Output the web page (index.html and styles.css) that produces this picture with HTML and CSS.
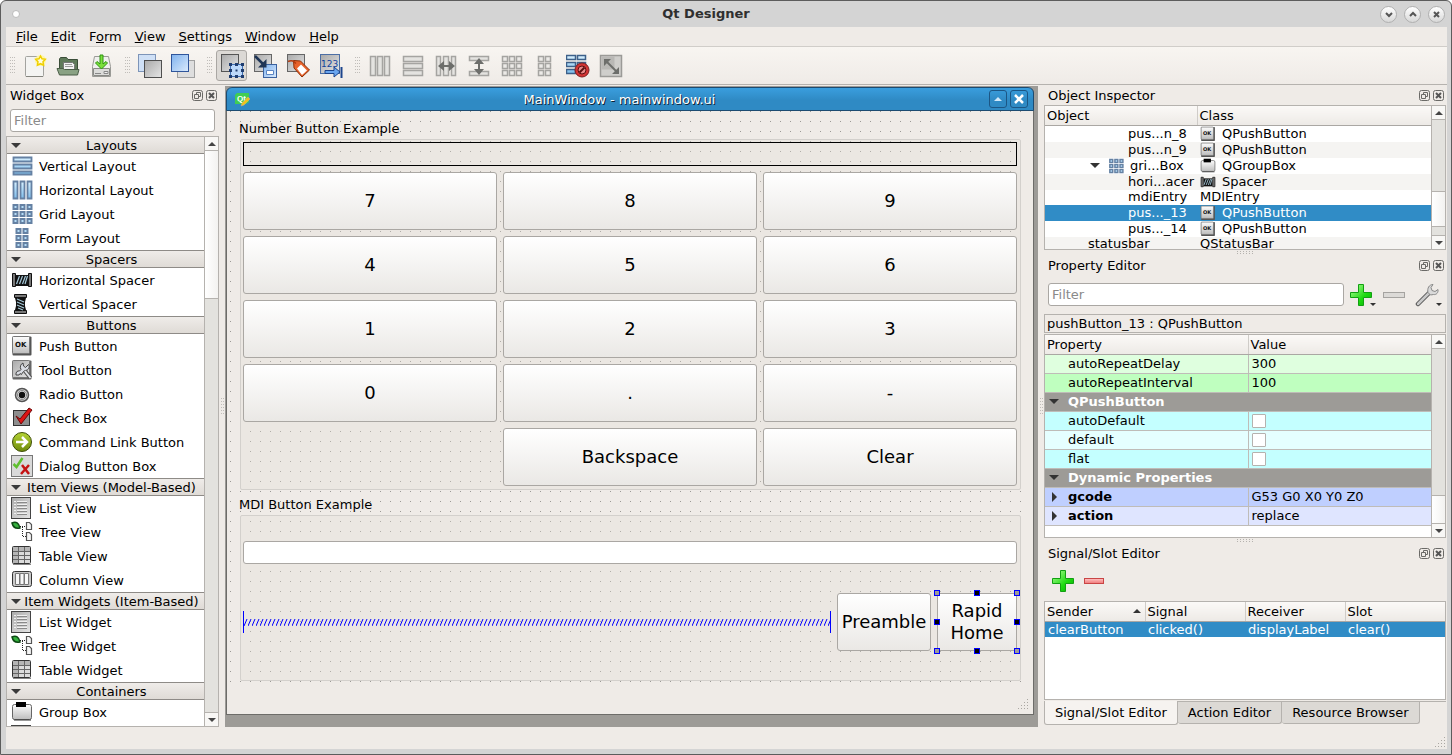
FILE: index.html
```html
<!DOCTYPE html>
<html lang="en">
<head>
    <meta charset="UTF-8">
    <meta name="viewport" content="width=device-width, initial-scale=1.0">
    <title>Qt Designer</title>
    <link rel="stylesheet" href="styles.css">
</head>
<body>

    <!-- icon set -->
    <svg class="defs" width="0" height="0" aria-hidden="true">
        <defs>
            <linearGradient id="g-blue" x1="0" y1="0" x2="1" y2="1"><stop offset="0" stop-color="#7fb2ee"/><stop offset="1" stop-color="#dcebfc"/></linearGradient>
            <linearGradient id="g-cell" x1="0" y1="0" x2="0" y2="1"><stop offset="0" stop-color="#d9f1ff"/><stop offset="1" stop-color="#7cbdec"/></linearGradient>
            <linearGradient id="g-grey" x1="0" y1="0" x2="1" y2="1"><stop offset="0" stop-color="#8d8d8d"/><stop offset="1" stop-color="#e6e6e6"/></linearGradient>
            <linearGradient id="g-pale" x1="0" y1="0" x2="1" y2="1"><stop offset="0" stop-color="#a9a9a9"/><stop offset="1" stop-color="#e6e6e6"/></linearGradient>
            <linearGradient id="g-light" x1="0" y1="0" x2="0" y2="1"><stop offset="0" stop-color="#fdfdfd"/><stop offset="1" stop-color="#bdbdbd"/></linearGradient>
            <linearGradient id="g-green" x1="0" y1="0" x2="1" y2="1"><stop offset="0" stop-color="#b6ff9e"/><stop offset="0.6" stop-color="#1edb10"/><stop offset="1" stop-color="#06a806"/></linearGradient>
            <linearGradient id="g-red" x1="0" y1="0" x2="0" y2="1"><stop offset="0" stop-color="#ffc4c4"/><stop offset="1" stop-color="#f07878"/></linearGradient>
            <linearGradient id="g-olive" x1="0" y1="0" x2="0" y2="1"><stop offset="0" stop-color="#b5d334"/><stop offset="1" stop-color="#6d8a0b"/></linearGradient>
        </defs>

        <symbol id="new" viewBox="0 0 24 24">
            <rect x="2.500" y="2.500" width="18" height="20" rx="1" fill="#f4f4f2" stroke="#a3a39f"/>
            <path d="M3 22.500h17" stroke="#85857f"/>
            <circle cx="17.500" cy="6.500" r="5.500" fill="#fff6a8"/>
            <path d="M17.500 2l1.500 2.800 3.300.5-2.300 2.500.6 3.400-3.100-1.500-3.100 1.500.6-3.400-2.300-2.500 3.300-.5z" fill="#fffce0" stroke="#f0d000" stroke-width="1.500"/>
        </symbol>
        <symbol id="open" viewBox="0 0 24 24">
            <path d="M3.500 18V5l1-1.500h6l1.500 2h9.500V16z" fill="#5f7a5a" stroke="#3a4d38"/>
            <path d="M7.500 8.500h9l2 2v6h-11z" fill="#f2f2f2" stroke="#777"/>
            <path d="M9 10.500h7M9 12.500h8" stroke="#999"/>
            <path d="M1 14.500h6l1.500 1h14.500l-1.500 5.500h-18z" fill="#8aa284" stroke="#4b5f48"/>
        </symbol>
        <symbol id="save" viewBox="0 0 24 24">
            <path d="M5.500 2.500h14l2 10v10h-18v-10z" fill="#f0f0ee" stroke="#9a9a96"/>
            <path d="M4.500 14.500h16v7h-16z" fill="#dcdcda" stroke="#8a8a86"/>
            <path d="M6 19.500h6M15 17.500h4v2h-4z" stroke="#888" fill="#eee"/>
            <path d="M11 1h3v9l3-2.500 1.500 1.500L12.500 15 6.500 9 8 7.500l3 2.500z" fill="#7be03c" stroke="#2c9410"/>
        </symbol>
        <symbol id="lower" viewBox="0 0 24 24">
            <rect x=".5" y=".5" width="17" height="17" fill="#cfe0f6" stroke="#7d94b8"/>
            <rect x="6.500" y="6.500" width="17" height="17" fill="url(#g-pale)" stroke="#4f4f4f"/>
        </symbol>
        <symbol id="raise" viewBox="0 0 24 24">
            <rect x="6.500" y="6.500" width="17" height="17" fill="#dedede" stroke="#a0a0a0"/>
            <rect x=".5" y=".5" width="17" height="17" fill="url(#g-blue)" stroke="#2f559b"/>
        </symbol>
        <symbol id="edit-widgets" viewBox="0 0 24 24">
            <rect x="1.500" y=".5" width="17" height="17" fill="url(#g-pale)" stroke="#555"/>
            <rect x="10.500" y="10.500" width="12" height="12" fill="#bcd8fa" stroke="#3f6fb5"/>
            <path d="M9 9h3v3H9zM15 9h3v3h-3zM21 9h3v3h-3zM9 15h3v3H9zM21 15h3v3h-3zM9 21h3v3H9zM15 21h3v3h-3zM21 21h3v3h-3z" fill="#1f3c6e"/>
            <rect x="15.500" y="15.500" width="2" height="2" fill="#1f3c6e"/>
        </symbol>
        <symbol id="edit-signals" viewBox="0 0 24 24">
            <rect x="1.500" y=".5" width="17" height="17" fill="url(#g-pale)" stroke="#666"/>
            <rect x="10.500" y="10.500" width="13" height="13" fill="url(#g-blue)" stroke="#3b62a0"/>
            <path d="M13.500 16.500h7v4h-7z" fill="#fff" stroke="#5c86c4"/>
            <path d="M2 2l9 9" stroke="#1f3556" stroke-width="2.500"/>
            <path d="M13.500 5v8.500H5z" fill="#1f3556"/>
        </symbol>
        <symbol id="edit-buddies" viewBox="0 0 24 24">
            <rect x="1.500" y=".5" width="17" height="17" fill="url(#g-pale)" stroke="#666"/>
            <path d="M7.500 6.500l7 .5 9 9-7.500 7-8-9z" fill="#e8622a" stroke="#8c3008"/>
            <path d="M11 14.500l4-4 6 6-5 4.500z" fill="#fff"/>
            <path d="M2 7.500c4-2 6 0 8 2" fill="none" stroke="#b33b10" stroke-width="1.500"/>
        </symbol>
        <symbol id="tab-order" viewBox="0 0 24 24">
            <rect x="1.500" y=".5" width="19" height="19" fill="url(#g-pale)" stroke="#4d6fa5"/>
            <path d="M6 16.500h9v-3.500l6 5-6 5v-3.500H6z" fill="#6aa6ef" stroke="#1c458c"/>
            <path d="M22.500 13v11" stroke="#1c458c" stroke-width="2"/>
        </symbol>
        <symbol id="t-hbox" viewBox="0 0 24 24">
            <path d="M2.500 2.500h5v19h-5zM9.500 2.500h5v19h-5zM16.500 2.500h5v19h-5z" fill="#e4e3e0" stroke="#a5a4a1" stroke-width="1.500"/>
        </symbol>
        <symbol id="t-vbox" viewBox="0 0 24 24">
            <path d="M2.500 2.500h19v5h-19zM2.500 9.500h19v5h-19zM2.500 16.500h19v5h-19z" fill="#e4e3e0" stroke="#a5a4a1" stroke-width="1.500"/>
        </symbol>
        <symbol id="t-hsplit" viewBox="0 0 24 24">
            <path d="M2.500 2.500h4v19h-4zM9.500 2.500h5v19h-5zM17.500 2.500h4v19h-4z" fill="#e4e3e0" stroke="#a5a4a1" stroke-width="1.500"/>
            <path d="M4 12l6-5v4h5V7l6 5-6 5v-4h-5v4z" fill="#6d6e6b"/>
        </symbol>
        <symbol id="t-vsplit" viewBox="0 0 24 24">
            <path d="M2.500 2.500h19v4h-19zM2.500 17.500h19v4h-19z" fill="#e4e3e0" stroke="#a5a4a1" stroke-width="1.500"/>
            <path d="M12 4l5 6h-4v5h4l-5 6-5-6h4v-5H7z" fill="#6d6e6b"/>
        </symbol>
        <symbol id="t-grid" viewBox="0 0 24 24">
            <path d="M2.500 2.500h5v5h-5zM9.500 2.500h5v5h-5zM16.500 2.500h5v5h-5zM2.500 9.500h5v5h-5zM9.500 9.500h5v5h-5zM16.500 9.500h5v5h-5zM2.500 16.500h5v5h-5zM9.500 16.500h5v5h-5zM16.500 16.500h5v5h-5z" fill="#eceae7" stroke="#a5a4a1" stroke-width="1.500"/>
        </symbol>
        <symbol id="t-form" viewBox="0 0 24 24">
            <path d="M5.500 2.500h5v5h-5zM12.500 2.500h5v5h-5zM5.500 9.500h5v5h-5zM12.500 9.500h5v5h-5zM5.500 16.500h5v5h-5zM12.500 16.500h5v5h-5z" fill="#eceae7" stroke="#a5a4a1" stroke-width="1.500"/>
        </symbol>
        <symbol id="t-break" viewBox="0 0 24 24">
            <path d="M.5 1.500h9v4h-9zM11.500 1.500h8v4h-8zM.5 8.500h9v4h-9zM11.500 8.500h8v4h-8zM.5 15.500h9v4h-9z" fill="url(#g-cell)" stroke="#3d6089" stroke-width="1.500"/>
            <circle cx="16" cy="16" r="7" fill="#d23434" stroke="#7d2020"/>
            <circle cx="16" cy="16" r="4" fill="#e88a8a" stroke="#5d1010"/>
            <path d="M13.500 18.500l5-5" stroke="#5d1010" stroke-width="2"/>
        </symbol>
        <symbol id="t-adjust" viewBox="0 0 24 24">
            <rect x="1.500" y="1.500" width="21" height="21" fill="#cfcecb" stroke="#9b9a97" stroke-width="1.500"/>
            <rect x="2.500" y="2.500" width="13" height="13" fill="#b9b8b5"/>
            <path d="M7 7l11 11" stroke="#6d6e6b" stroke-width="2"/>
            <path d="M5 5h7l-7 7zM20 20h-7l7-7z" fill="#6d6e6b"/>
        </symbol>

        <symbol id="vbox" viewBox="0 0 22 22">
            <path d="M2.500 2.500h18v4h-18zM2.500 9.500h18v4h-18zM2.500 16.500h18v3h-18z" fill="url(#g-cell)" stroke="#6581a3" stroke-width="1.800"/>
        </symbol>
        <symbol id="hbox" viewBox="0 0 22 22">
            <path d="M2.500 2.500h4v17h-4zM9.500 2.500h4v17h-4zM16.500 2.500h4v17h-4z" fill="url(#g-cell)" stroke="#6581a3" stroke-width="1.800"/>
        </symbol>
        <symbol id="grid" viewBox="0 0 22 22">
            <path d="M2.500 2h4v4h-4zM9.500 2h4v4h-4zM16.500 2h4v4h-4zM2.500 9h4v4h-4zM9.500 9h4v4h-4zM16.500 9h4v4h-4zM2.500 16h4v4h-4zM9.500 16h4v4h-4zM16.500 16h4v4h-4z" fill="#b5ddf8" stroke="#6581a3" stroke-width="2"/>
        </symbol>
        <symbol id="form" viewBox="0 0 22 22">
            <path d="M5.500 2h4v4h-4zM12.500 2h4v4h-4zM5.500 9h4v4h-4zM12.500 9h4v4h-4zM5.500 16h4v4h-4zM12.500 16h4v4h-4z" fill="#b5ddf8" stroke="#6581a3" stroke-width="2"/>
        </symbol>
        <symbol id="hspacer" viewBox="0 0 22 22">
            <path d="M1.500 4.500h3v13h-3zM17.500 4.500h3v13h-3z" fill="#777" stroke="#111"/>
            <path d="M5 6h12v11H5z" fill="#111"/>
            <path d="M5.500 15l3-8M8.500 15l3-8M11.500 15l3-8M14 15l2.500-8" stroke="#a5c8d8" stroke-width="1.200"/>
        </symbol>
        <symbol id="vspacer" viewBox="0 0 22 22">
            <path d="M3.500 1.500h12v3h-12zM3.500 17.500h12v3h-12z" fill="#777" stroke="#111"/>
            <path d="M4 5h11l-1 4v4l1 4H4l1-4V9z" fill="#111"/>
            <path d="M6 6l7 3M6 9l7 3M6 12l7 3M7 15l5 2" stroke="#a5c8d8" stroke-width="1.200"/>
        </symbol>
        <symbol id="pushbutton" viewBox="0 0 22 22">
            <rect x="1.500" y="1.500" width="19" height="19" rx="1" fill="#555"/>
            <rect x="1.500" y="1.500" width="17" height="17" rx="1" fill="url(#g-light)" stroke="#777"/>
        </symbol>
        <symbol id="toolbutton" viewBox="0 0 22 22">
            <rect x="1.500" y="1.500" width="19" height="19" rx="1" fill="#666"/>
            <rect x="1.500" y="1.500" width="17" height="17" rx="1" fill="url(#g-pale)" stroke="#777"/>
            <path d="M12 4a4.500 4.500 0 0 0-2 6.500l-1.500 1.500c-2-.5-4 1-3.500 4h3l1-1.500 1.500 1 1-2 2.500-2c4 0 5-4 3.500-6L14.500 8.500 12.500 7z" fill="#d9dce3" stroke="#444"/>
            <path d="M14 12l5.500 7" stroke="#555" stroke-width="4"/>
            <path d="M14 12l5.500 7" stroke="#e2e4e8" stroke-width="2"/>
        </symbol>
        <symbol id="radio" viewBox="0 0 22 22">
            <circle cx="11" cy="12" r="6.500" fill="#d5d5d5" stroke="#555" stroke-width="1.500"/>
            <circle cx="11" cy="12" r="4.500" fill="#e5e5e5" stroke="#888"/>
            <circle cx="11" cy="12" r="3.200" fill="#111"/>
        </symbol>
        <symbol id="checkbox" viewBox="0 0 22 22">
            <rect x="2.500" y="3.500" width="16" height="15" fill="#8e8e8e" stroke="#333"/>
            <path d="M5 9l4 3 9-11 3 2-11 14z" fill="#dd1414" stroke="#6d0707"/>
        </symbol>
        <symbol id="cmdlink" viewBox="0 0 22 22">
            <circle cx="11" cy="11" r="9.500" fill="url(#g-olive)" stroke="#3f4f08"/>
            <path d="M5 11h10M11 6l5 5-5 5" fill="none" stroke="#fff" stroke-width="2.500"/>
        </symbol>
        <symbol id="dialogbox" viewBox="0 0 22 22">
            <rect x=".5" y=".5" width="21" height="21" fill="#d9d9d9" stroke="#777"/>
            <path d="M2.500 9l3 3 6-9" fill="none" stroke="#5fbf2f" stroke-width="2.500"/>
            <path d="M11 10l7 9M18 10l-8 9" stroke="#c51212" stroke-width="2.500"/>
        </symbol>
        <symbol id="listview" viewBox="0 0 22 22">
            <rect x=".5" y=".5" width="19" height="21" fill="url(#g-pale)" stroke="#444"/>
            <path d="M3 4.500h2M3 7.500h2M3 10.500h2M3 13.500h2M3 16.500h2M6 4.500h10M6 7.500h10M6 10.500h10M6 13.500h10M6 16.500h10" stroke="#efefef"/>
            <path d="M6 5.500h10M6 8.500h10M6 11.500h10M6 14.500h10M6 17.500h10" stroke="#8a8a8a"/>
        </symbol>
        <symbol id="treeview" viewBox="0 0 22 22">
            <path d="M1 2c4-2 7 0 8 5-4 1-7-1-8-5z" fill="#35b23e" stroke="#0d4a14" stroke-width="1.500"/>
            <path d="M9 5.500h6M11.500 6v10M12 15.500h4" fill="none" stroke="#222" stroke-dasharray="1 1"/>
            <path d="M15.500 1.500h3l2 2v5h-5zM15.500 11.500h3l2 2v6h-5z" fill="#f5f5f5" stroke="#555" stroke-width="1.200"/>
        </symbol>
        <symbol id="tableview" viewBox="0 0 22 22">
            <rect x="1.500" y="1.500" width="18" height="17" rx="1" fill="#dcdcdc" stroke="#333"/>
            <path d="M2 2h17v4H2zM2 2h5v16H2z" fill="#b5b5b5"/>
            <path d="M2 6.500h17M2 10.500h17M2 14.500h17M7.500 2v16M13.500 2v16" stroke="#666"/>
            <path d="M2 19.500h18" stroke="#888"/>
        </symbol>
        <symbol id="columnview" viewBox="0 0 22 22">
            <rect x="1.500" y="2.500" width="19" height="15" rx="2" fill="#c9c9c9" stroke="#333"/>
            <path d="M4.500 4.500h4v11h-4zM9 4.500h4v11H9zM13.500 4.500h4v11h-4z" fill="#f7f7f7" stroke="#777"/>
        </symbol>
        <symbol id="groupbox" viewBox="0 0 22 22">
            <rect x="1.500" y="3.500" width="19" height="15" rx="2" fill="url(#g-light)" stroke="#666"/>
            <path d="M3 19h17" stroke="#333"/>
            <rect x="5" y="1" width="10" height="5" fill="#000"/>
        </symbol>

        <symbol id="plus" viewBox="0 0 24 24">
            <path d="M9.500 1.500h5v8h8v5h-8v8h-5v-8h-8v-5h8z" fill="url(#g-green)" stroke="#12a012"/>
        </symbol>
        <symbol id="minus-red" viewBox="0 0 24 24">
            <rect x="2.500" y="9.500" width="19" height="5" fill="url(#g-red)" stroke="#c94545"/>
        </symbol>
        <symbol id="minus-grey" viewBox="0 0 24 24">
            <rect x="1.500" y="9.500" width="21" height="5" fill="#dcdad7" stroke="#a5a3a0"/>
        </symbol>
        <symbol id="wrench" viewBox="0 0 24 24">
            <path d="M3 21L15 9" stroke="#555" stroke-width="4.500" stroke-linecap="round"/>
            <path d="M3 21L15 9" stroke="#c9c9c9" stroke-width="2.500" stroke-linecap="round"/>
            <path d="M18 1.500l-2 3 1 3 3 1 3-2c.5 3-1.500 5.500-4.500 5l-3 .5-2.500-2.500c-1-4 1-8 5-8z" fill="#d9d9d9" stroke="#888"/>
        </symbol>
        <symbol id="float" viewBox="0 0 12 12">
            <rect x=".5" y=".5" width="10" height="10" rx="2" fill="none" stroke="#6b6a67"/>
            <path d="M4.500 4.500v-2h4v4h-2M2.500 4.500h4v4h-4z" fill="none" stroke="#6b6a67"/>
        </symbol>
        <symbol id="close" viewBox="0 0 12 12">
            <rect x=".5" y=".5" width="10" height="10" rx="2" fill="none" stroke="#6b6a67"/>
            <path d="M3 3l5 5M8 3L3 8" stroke="#555" stroke-width="2"/>
        </symbol>
        <symbol id="qt" viewBox="0 0 16 16">
            <path d="M3 2h12v9l-3 2H1V4z" fill="#41cd52"/>
        </symbol>
        <symbol id="pencil" viewBox="0 0 16 16">
            <path d="M7 15l1-3 6-6 2 2-6 6z" fill="#f2c21a" stroke="#c9b48a" stroke-width=".5"/>
        </symbol>
        <symbol id="grip" viewBox="0 0 12 12">
            <path d="M10 1.500h1M7 4.500h1M10 4.500h1M4 7.500h1M7 7.500h1M10 7.500h1M1 10.500h1M4 10.500h1M7 10.500h1M10 10.500h1" stroke="#aaa7a2"/>
        </symbol>
    </svg>

    <div class="window">
        <header class="titlebar">
            <span class="titlebar-dot"></span>
            <h1>Qt Designer</h1>
            <div class="titlebar-buttons">
                <button aria-label="Minimize"><svg width="17" height="17"><path d="M6 7l3 3 3-3"/></svg></button>
                <button aria-label="Maximize"><svg width="17" height="17"><path d="M6 10l3-3 3 3"/></svg></button>
                <button aria-label="Close"><svg width="17" height="17"><path d="M6 6l5 5M11 6l-5 5"/></svg></button>
            </div>
        </header>

        <nav class="menubar">
            <a href="#"><u>F</u>ile</a>
            <a href="#"><u>E</u>dit</a>
            <a href="#">F<u>o</u>rm</a>
            <a href="#"><u>V</u>iew</a>
            <a href="#"><u>S</u>ettings</a>
            <a href="#"><u>W</u>indow</a>
            <a href="#"><u>H</u>elp</a>
        </nav>

        <div class="toolbar">
            <span class="handle"></span>
            <button aria-label="New"><svg><use href="#new"/></svg></button>
            <button aria-label="Open"><svg><use href="#open"/></svg></button>
            <button aria-label="Save"><svg><use href="#save"/></svg></button>
            <span class="handle"></span>
            <button aria-label="Send to Back"><svg><use href="#lower"/></svg></button>
            <button aria-label="Bring to Front"><svg><use href="#raise"/></svg></button>
            <span class="handle"></span>
            <button class="checked" aria-label="Edit Widgets"><svg><use href="#edit-widgets"/></svg></button>
            <button aria-label="Edit Signals/Slots"><svg><use href="#edit-signals"/></svg></button>
            <button aria-label="Edit Buddies"><svg><use href="#edit-buddies"/></svg></button>
            <button aria-label="Edit Tab Order"><svg viewBox="0 0 24 24"><use href="#tab-order"/><text class="order-text" x="2" y="13">123</text></svg></button>
            <span class="handle"></span>
            <button aria-label="Lay Out Horizontally"><svg><use href="#t-hbox"/></svg></button>
            <button aria-label="Lay Out Vertically"><svg><use href="#t-vbox"/></svg></button>
            <button aria-label="Horizontal Splitter"><svg><use href="#t-hsplit"/></svg></button>
            <button aria-label="Vertical Splitter"><svg><use href="#t-vsplit"/></svg></button>
            <button aria-label="Lay Out in a Grid"><svg><use href="#t-grid"/></svg></button>
            <button aria-label="Lay Out in a Form"><svg><use href="#t-form"/></svg></button>
            <button aria-label="Break Layout"><svg><use href="#t-break"/></svg></button>
            <button aria-label="Adjust Size"><svg><use href="#t-adjust"/></svg></button>
        </div>

        <main class="workspace">
            <section class="dock widget-box">
                <div class="dock-title">
                    <h2>Widget Box</h2>
                    <button aria-label="Float"><svg><use href="#float"/></svg></button>
                    <button aria-label="Close"><svg><use href="#close"/></svg></button>
                </div>
                <input class="filter" type="text" placeholder="Filter" aria-label="Filter widgets">
                <div class="view widget-view">
                    <div class="view-body">
                        <button class="category">Layouts</button>
                        <ul>
                            <li><svg><use href="#vbox"/></svg>Vertical Layout</li>
                            <li><svg><use href="#hbox"/></svg>Horizontal Layout</li>
                            <li><svg><use href="#grid"/></svg>Grid Layout</li>
                            <li><svg><use href="#form"/></svg>Form Layout</li>
                        </ul>
                        <button class="category">Spacers</button>
                        <ul>
                            <li><svg><use href="#hspacer"/></svg>Horizontal Spacer</li>
                            <li><svg><use href="#vspacer"/></svg>Vertical Spacer</li>
                        </ul>
                        <button class="category">Buttons</button>
                        <ul>
                            <li><svg viewBox="0 0 22 22"><use href="#pushbutton"/><text class="ok-text" x="4" y="12">OK</text></svg>Push Button</li>
                            <li><svg><use href="#toolbutton"/></svg>Tool Button</li>
                            <li><svg><use href="#radio"/></svg>Radio Button</li>
                            <li><svg><use href="#checkbox"/></svg>Check Box</li>
                            <li><svg><use href="#cmdlink"/></svg>Command Link Button</li>
                            <li><svg><use href="#dialogbox"/></svg>Dialog Button Box</li>
                        </ul>
                        <button class="category">Item Views (Model-Based)</button>
                        <ul>
                            <li><svg><use href="#listview"/></svg>List View</li>
                            <li><svg><use href="#treeview"/></svg>Tree View</li>
                            <li><svg><use href="#tableview"/></svg>Table View</li>
                            <li><svg><use href="#columnview"/></svg>Column View</li>
                        </ul>
                        <button class="category">Item Widgets (Item-Based)</button>
                        <ul>
                            <li><svg><use href="#listview"/></svg>List Widget</li>
                            <li><svg><use href="#treeview"/></svg>Tree Widget</li>
                            <li><svg><use href="#tableview"/></svg>Table Widget</li>
                        </ul>
                        <button class="category">Containers</button>
                        <ul>
                            <li><svg><use href="#groupbox"/></svg>Group Box</li>
                            <li><svg><use href="#listview"/></svg></li>
                        </ul>
                    </div>
                    <div class="scrollbar at-top">
                        <button class="up" aria-label="Scroll up"></button>
                        <div class="track"><div class="thumb"></div></div>
                        <button class="down" aria-label="Scroll down"></button>
                    </div>
                </div>
            </section>

            <div class="splitter"></div>

            <section class="mdi">
                <div class="subwindow">
                    <div class="sub-title">
                        <svg class="qt-logo" viewBox="0 0 16 16"><use href="#qt"/><text class="qt-text" x="3" y="10">Qt</text><use href="#pencil"/></svg>
                        <h2>MainWindow - mainwindow.ui</h2>
                        <button aria-label="Shade"><svg width="16" height="16"><path d="M4 10h8l-4-4z" fill="#cfe8fa"/></svg></button>
                        <button aria-label="Close"><svg width="16" height="16"><path d="M4 4l8 8M12 4l-8 8" stroke="#fff" stroke-width="2.500"/></svg></button>
                    </div>
                    <div class="form">
                        <h3>Number Button Example</h3>
                        <div class="group">
                            <div class="display"></div>
                            <div class="keypad">
                                <button>7</button>
                                <button>8</button>
                                <button>9</button>
                                <button>4</button>
                                <button>5</button>
                                <button>6</button>
                                <button>1</button>
                                <button>2</button>
                                <button>3</button>
                                <button>0</button>
                                <button>.</button>
                                <button>-</button>
                                <span></span>
                                <button>Backspace</button>
                                <button>Clear</button>
                            </div>
                        </div>
                        <h3>MDI Button Example</h3>
                        <div class="group mdi-group">
                            <input class="mdi-entry" type="text" aria-label="MDI entry">
                            <div class="mdi-row">
                                <svg class="h-spacer" height="22">
                                    <defs>
                                        <pattern id="hatch" width="4" height="7" patternUnits="userSpaceOnUse" y="8">
                                            <path d="M0 7L3 0" stroke="#0000ff" fill="none"/>
                                        </pattern>
                                    </defs>
                                    <rect x="0" y="8" width="100%" height="7" fill="url(#hatch)"/>
                                </svg>
                                <button class="preamble">Preamble</button>
                                <div class="selected">
                                    <button>Rapid<br>Home</button>
                                    <i class="knob tl"></i><i class="knob mid tc"></i><i class="knob tr"></i>
                                    <i class="knob mid ml"></i><i class="knob mid mr"></i>
                                    <i class="knob bl"></i><i class="knob mid bc"></i><i class="knob br"></i>
                                </div>
                            </div>
                        </div>
                    </div>
                    <div class="sub-status"><svg class="grip"><use href="#grip"/></svg></div>
                </div>
            </section>

            <div class="splitter"></div>

            <div class="right">
                <section class="dock">
                    <div class="dock-title">
                        <h2>Object Inspector</h2>
                        <button aria-label="Float"><svg><use href="#float"/></svg></button>
                        <button aria-label="Close"><svg><use href="#close"/></svg></button>
                    </div>
                    <div class="view object-view">
                        <div class="view-body">
                            <table class="objects">
                                <colgroup><col class="col-object"><col></colgroup>
                                <thead><tr><th>Object</th><th>Class</th></tr></thead>
                                <tbody>
                                    <tr><td class="level-3">pus...n_8</td><td><svg viewBox="0 0 22 22"><use href="#pushbutton"/><text class="ok-text" x="4" y="12">OK</text></svg>QPushButton</td></tr>
                                    <tr><td class="level-3">pus...n_9</td><td><svg viewBox="0 0 22 22"><use href="#pushbutton"/><text class="ok-text" x="4" y="12">OK</text></svg>QPushButton</td></tr>
                                    <tr><td class="level-2"><i class="arrow"></i><svg><use href="#grid"/></svg>gri...Box</td><td><svg><use href="#groupbox"/></svg>QGroupBox</td></tr>
                                    <tr><td class="level-3">hori...acer</td><td><svg><use href="#hspacer"/></svg>Spacer</td></tr>
                                    <tr class="short"><td class="level-3">mdiEntry</td><td>MDIEntry</td></tr>
                                    <tr class="current"><td class="level-3">pus..._13</td><td><svg viewBox="0 0 22 22"><use href="#pushbutton"/><text class="ok-text" x="4" y="12">OK</text></svg>QPushButton</td></tr>
                                    <tr><td class="level-3">pus..._14</td><td><svg viewBox="0 0 22 22"><use href="#pushbutton"/><text class="ok-text" x="4" y="12">OK</text></svg>QPushButton</td></tr>
                                    <tr class="short"><td class="level-1">statusbar</td><td>QStatusBar</td></tr>
                                </tbody>
                            </table>
                        </div>
                        <div class="scrollbar near-end">
                            <button class="up" aria-label="Scroll up"></button>
                            <div class="track"><div class="thumb"></div></div>
                            <button class="down" aria-label="Scroll down"></button>
                        </div>
                    </div>
                </section>

                <div class="splitter-h"></div>

                <section class="dock property-dock">
                    <div class="dock-title">
                        <h2>Property Editor</h2>
                        <button aria-label="Float"><svg><use href="#float"/></svg></button>
                        <button aria-label="Close"><svg><use href="#close"/></svg></button>
                    </div>
                    <div class="property-tools">
                        <input class="filter" type="text" placeholder="Filter" aria-label="Filter properties">
                        <button class="has-menu" aria-label="Add dynamic property"><svg><use href="#plus"/></svg></button>
                        <button aria-label="Remove dynamic property"><svg><use href="#minus-grey"/></svg></button>
                        <button class="has-menu" aria-label="Configure"><svg><use href="#wrench"/></svg></button>
                    </div>
                    <div class="object-name">pushButton_13 : QPushButton</div>
                    <div class="view property-view">
                        <div class="view-body">
                            <table class="properties">
                                <colgroup><col class="col-property"><col></colgroup>
                                <thead><tr><th>Property</th><th>Value</th></tr></thead>
                                <tbody>
                                    <tr class="green-1"><td>autoRepeatDelay</td><td>300</td></tr>
                                    <tr class="green-2"><td>autoRepeatInterval</td><td>100</td></tr>
                                    <tr class="section"><td colspan="2"><i class="arrow"></i><b>QPushButton</b></td></tr>
                                    <tr class="cyan-2"><td id="p-auto">autoDefault</td><td><input type="checkbox" aria-labelledby="p-auto"></td></tr>
                                    <tr class="cyan-1"><td id="p-default">default</td><td><input type="checkbox" aria-labelledby="p-default"></td></tr>
                                    <tr class="cyan-2"><td id="p-flat">flat</td><td><input type="checkbox" aria-labelledby="p-flat"></td></tr>
                                    <tr class="section"><td colspan="2"><i class="arrow"></i><b>Dynamic Properties</b></td></tr>
                                    <tr class="blue-2"><td><i class="arrow closed"></i><b>gcode</b></td><td>G53 G0 X0 Y0 Z0</td></tr>
                                    <tr class="blue-1"><td><i class="arrow closed"></i><b>action</b></td><td>replace</td></tr>
                                </tbody>
                            </table>
                        </div>
                        <div class="scrollbar at-end">
                            <button class="up" aria-label="Scroll up"></button>
                            <div class="track"><div class="thumb"></div></div>
                            <button class="down" aria-label="Scroll down"></button>
                        </div>
                    </div>
                </section>

                <div class="splitter-h"></div>

                <section class="dock">
                    <div class="dock-title">
                        <h2>Signal/Slot Editor</h2>
                        <button aria-label="Float"><svg><use href="#float"/></svg></button>
                        <button aria-label="Close"><svg><use href="#close"/></svg></button>
                    </div>
                    <div class="signal-tools">
                        <button aria-label="Add connection"><svg><use href="#plus"/></svg></button>
                        <button aria-label="Remove connection"><svg><use href="#minus-red"/></svg></button>
                    </div>
                    <div class="view signal-view">
                        <div class="view-body">
                            <table class="signals">
                                <thead><tr><th class="sorted">Sender</th><th>Signal</th><th>Receiver</th><th>Slot</th></tr></thead>
                                <tbody><tr class="current"><td>clearButton</td><td>clicked()</td><td>displayLabel</td><td>clear()</td></tr></tbody>
                            </table>
                        </div>
                    </div>
                </section>

                <div class="tabs" role="tablist">
                    <button role="tab" class="active" aria-selected="true">Signal/Slot Editor</button>
                    <button role="tab">Action Editor</button>
                    <button role="tab">Resource Browser</button>
                </div>
            </div>
        </main>

        <footer class="statusbar"><svg class="grip"><use href="#grip"/></svg></footer>
    </div>

</body>
</html>
```

FILE: styles.css
```css
* {
    box-sizing: border-box;
}
body {
    margin: 0;
    background: #fff;
    font: 13px/16px "DejaVu Sans", sans-serif;
    color: #000;
}
h1, h2, h3, ul {
    margin: 0;
    padding: 0;
    font-size: 13px;
    font-weight: normal;
    list-style: none;
}
button, input {
    font: inherit;
    color: inherit;
    margin: 0;
}
button {
    padding: 0;
    border: none;
    background: none;
}
svg {
    display: block;
    flex: none;
}
.defs {
    position: absolute;
}
.ok-text {
    font-size: 7px;
    font-weight: bold;
    fill: #111;
}
.order-text {
    font-size: 9px;
    fill: #12449c;
}
.qt-text {
    font: bold 8px "Liberation Sans", sans-serif;
    fill: #fff;
}

/* main window */
.window {
    display: flex;
    flex-direction: column;
    height: 100vh;
    min-height: 640px;
    padding: 0 4px 5px 5px;
    border: 1px solid #5c5c5c;
    border-radius: 6px 6px 0 0;
    background: #d4d4d4;
}
.titlebar {
    display: flex;
    align-items: center;
    flex: none;
    height: 26px;
    padding-left: 6px;
}
.titlebar h1 {
    flex: 1;
    padding-left: 12px;
    font-weight: bold;
    text-align: center;
    color: #2f2f2f;
}
.titlebar-dot {
    width: 8px;
    height: 8px;
    border: 1px solid #bbb;
    border-radius: 50%;
    background: #fff;
}
.titlebar-buttons {
    display: flex;
    gap: 7px;
    padding-right: 2px;
}
.titlebar-buttons button {
    width: 17px;
    height: 17px;
    border: 1px solid #b0b0b0;
    border-radius: 50%;
    background: linear-gradient(#fff, #d8d8d8);
}
.titlebar-buttons svg {
    margin: -1px;
}
.titlebar-buttons path {
    fill: none;
    stroke: #555;
    stroke-width: 2;
}
.menubar {
    display: flex;
    flex: none;
    height: 20px;
    padding-left: 3px;
    border-bottom: 1px solid #d0cdc9;
    background: #efebe7;
}
.menubar a {
    padding: 2px 6px 0 7px;
    color: #000;
    text-decoration: none;
}
.toolbar {
    display: flex;
    align-items: center;
    flex: none;
    height: 38px;
    border-bottom: 1px solid #b5b2ae;
    background: linear-gradient(#f8f5f1, #efebe7);
}
.toolbar button {
    display: flex;
    align-items: center;
    justify-content: center;
    width: 31px;
    height: 31px;
    margin: 0 1px;
    border: 1px solid transparent;
    border-radius: 3px;
}
.toolbar .checked {
    border-color: #aaa7a3;
    background: #dcd9d5;
}
.toolbar svg {
    width: 24px;
    height: 24px;
}
.handle {
    width: 5px;
    height: 17px;
    margin: 0 3px 0 8px;
    background: conic-gradient(at 1px 1px, transparent 75%, #c0bdb9 0) 0 0 / 2px 3px;
}
.handle:first-child {
    margin-left: 4px;
}
.workspace {
    display: grid;
    grid-template-columns: 213px 6px minmax(500px, 1fr) 6px 402px;
    flex: 1;
    min-height: 0;
    padding: 1px 1px 0 0;
    background: #efebe7;
}
.statusbar {
    display: flex;
    align-items: flex-end;
    justify-content: flex-end;
    flex: none;
    height: 22px;
    padding: 1px 1px 1px 0;
    background: #efebe7;
}
.grip {
    width: 12px;
    height: 12px;
}
.splitter {
    align-self: center;
    justify-self: center;
    width: 3px;
    height: 17px;
    background: conic-gradient(at 1px 1px, transparent 75%, #c0bdb9 0) 0 0 / 2px 3px;
}
.splitter-h {
    flex: none;
    align-self: center;
    width: 17px;
    height: 3px;
    margin: 1px 0 2px;
    background: conic-gradient(at 1px 1px, transparent 75%, #b5b2ae 0) 0 0 / 3px 2px;
}

/* docks */
.dock {
    display: flex;
    flex-direction: column;
    min-height: 0;
}
.dock-title {
    display: flex;
    align-items: center;
    flex: none;
    gap: 2px;
    height: 19px;
    padding: 0 1px 0 4px;
}
.dock-title h2 {
    flex: 1;
}
.dock-title svg {
    width: 12px;
    height: 12px;
}
.filter {
    height: 23px;
    padding: 0 3px;
    border: 1px solid #aaa7a3;
    border-radius: 3px;
    background: #fff;
    outline: none;
}
.filter::placeholder {
    color: #8a8a8a;
    opacity: 1;
}
.view {
    display: flex;
    min-height: 0;
    border: 1px solid #b5b2ae;
    background: #fff;
    overflow: hidden;
}
.view-body {
    flex: 1;
    min-width: 0;
    overflow: hidden;
}
.widget-box .filter {
    flex: none;
    margin: 4px;
}
.widget-view {
    flex: 1;
}
.category {
    display: block;
    position: relative;
    width: 100%;
    height: 18px;
    padding-left: 12px;
    border-bottom: 1px solid #8e8b87;
    background: linear-gradient(#efece9, #dfdbd6);
    line-height: 17px;
    text-align: center;
}
ul + .category {
    border-top: 1px solid #8e8b87;
    line-height: 15px;
}
.category:first-child {
    height: 17px;
}
.category::before {
    content: "";
    position: absolute;
    left: 4px;
    top: 6px;
    border: 5px solid transparent;
    border-top-color: #3a3a3a;
    border-bottom: none;
}
.widget-view li {
    display: flex;
    align-items: center;
    gap: 6px;
    height: 24px;
    padding: 2px 0 0 4px;
}
.widget-view li svg {
    width: 22px;
    height: 22px;
    margin-top: -2px;
}

/* scrollbars */
.scrollbar {
    display: flex;
    flex-direction: column;
    flex: none;
    width: 14px;
    border-left: 1px solid #b5b2ae;
    background: #e3e2de;
}
.scrollbar button {
    display: flex;
    align-items: center;
    justify-content: center;
    height: 14px;
    background: #f8f7f5;
}
.scrollbar .up {
    border-bottom: 1px solid #b5b2ae;
}
.scrollbar .down {
    border-top: 1px solid #b5b2ae;
}
.scrollbar button::before {
    content: "";
    border: 4px solid transparent;
}
.scrollbar .up::before {
    border-bottom-color: #444;
    border-top: none;
}
.scrollbar .down::before {
    border-top-color: #444;
    border-bottom: none;
}
.track {
    display: flex;
    flex-direction: column;
    flex: 1;
}
.thumb {
    border-bottom: 1px solid #b5b2ae;
    background: linear-gradient(90deg, #fff, #f3f2f0);
}
.at-top .thumb {
    height: 148px;
}
.near-end .thumb {
    height: 36px;
    margin: auto 0 8px;
    border-top: 1px solid #b5b2ae;
}
.at-end .thumb {
    height: 28px;
    margin-top: auto;
    border-top: 1px solid #b5b2ae;
    border-bottom: none;
}

/* form window */
.mdi {
    display: flex;
    min-height: 0;
    padding: 1px 4px 12px 1px;
    background: #9d9b97;
}
.subwindow {
    display: flex;
    flex-direction: column;
    flex: 1;
    border: 1px solid #6d6c69;
    border-top: none;
    border-radius: 6px 6px 0 0;
    background: #efebe7;
}
.sub-title {
    display: flex;
    align-items: center;
    flex: none;
    gap: 3px;
    height: 24px;
    margin: 0 -1px;
    padding: 0 5px 0 7px;
    border: 1px solid #1c4b71;
    border-radius: 6px 6px 0 0;
    background: linear-gradient(#3a9ede, #2f8ac4 55%, #2f8ac4);
}
.sub-title h2 {
    flex: 1;
    padding-top: 2px;
    color: #fff;
    text-align: center;
    text-shadow: 1px 1px 0 #123;
}
.sub-title button {
    width: 18px;
    height: 18px;
    border: 1px solid #1c5684;
    border-radius: 3px;
}
.qt-logo {
    width: 16px;
    height: 16px;
}
.form {
    display: flex;
    flex-direction: column;
    flex: 1;
    min-height: 0;
    margin: 0 3px 0 2px;
    padding: 10px 9px 9px 11px;
    background: conic-gradient(at 1px 1px, transparent 75%, #9c9a96 0) 1px 0 / 10px 10px;
}
.form h3 {
    margin: 0 0 2px -1px;
}
.group {
    padding: 2px 3px 3px 2px;
    border: 1px solid #d3d0cc;
    border-radius: 2px;
    background: rgba(225, 222, 216, 0.3);
}
.group + h3 {
    margin-top: 7px;
}
.display {
    height: 24px;
    margin-bottom: 6px;
    border: 1px solid #000;
}
.keypad {
    display: grid;
    grid-template-columns: repeat(3, 1fr);
    gap: 6px;
}
.keypad button, .preamble, .selected button {
    height: 58px;
    border: 1px solid #aaa7a3;
    border-radius: 3px;
    background: linear-gradient(#fff, #eae8e5);
    font-size: 18px;
    line-height: 22px;
}
.mdi-group {
    display: flex;
    flex-direction: column;
    flex: 1;
    gap: 29px;
    padding-top: 25px;
}
.mdi-entry {
    height: 23px;
    border: 1px solid #aaa7a3;
    border-radius: 3px;
    background: #fff;
}
.mdi-row {
    display: flex;
    align-items: center;
    gap: 6px;
}
.h-spacer {
    flex: 1;
    min-width: 0;
    border: solid #0000ff;
    border-width: 0 1px;
}
.preamble {
    width: 94px;
}
.selected {
    position: relative;
    width: 80px;
}
.selected button {
    width: 100%;
}
.knob {
    position: absolute;
    width: 6px;
    height: 6px;
    border: 1px solid #0000ff;
    background: #9d9b97;
}
.mid {
    background: #000;
}
.tl, .tc, .tr {
    top: -3px;
}
.bl, .bc, .br {
    bottom: -3px;
}
.tl, .ml, .bl {
    left: -3px;
}
.tr, .mr, .br {
    right: -3px;
}
.tc, .bc {
    left: calc(50% - 3px);
}
.ml, .mr {
    top: calc(50% - 3px);
}
.sub-status {
    display: flex;
    align-items: flex-end;
    justify-content: flex-end;
    flex: none;
    height: 24px;
    padding: 4px;
}

/* right side */
.right {
    display: flex;
    flex-direction: column;
    min-height: 0;
    padding-bottom: 2px;
}
table {
    width: 100%;
    border-collapse: collapse;
    table-layout: fixed;
}
th, td {
    padding: 0 3px;
    font-weight: normal;
    text-align: left;
    white-space: nowrap;
    overflow: hidden;
}
th {
    height: 19px;
    padding: 2px 2px 0;
    border-bottom: 1px solid #aaa7a3;
    background: linear-gradient(#fbf9f7, #edeae6);
}
th + th {
    border-left: 1px solid #cfccc8;
}
.current {
    background: #308cc6;
    color: #fff;
}
.arrow {
    display: inline-block;
    border: 5px solid transparent;
    border-top-color: #333;
    border-bottom: none;
    vertical-align: 2px;
}
.arrow.closed {
    border: 5px solid transparent;
    border-left-color: #333;
    border-right: none;
    vertical-align: -1px;
}
.object-view {
    height: 145px;
}
.col-object {
    width: 152px;
}
.objects tbody tr {
    height: 16px;
}
.objects tbody .short {
    height: 15px;
}
.objects td {
    line-height: 15px;
}
.objects .short td {
    padding-bottom: 2px;
    line-height: 13px;
}
.objects tr:nth-child(even):not(.current) {
    background: #f5f4f2;
}
.objects svg {
    display: inline-block;
    width: 16px;
    height: 16px;
    margin-right: 6px;
    vertical-align: top;
}
.objects td.level-1 {
    padding-left: 43px;
}
.objects td.level-2 {
    padding-left: 45px;
}
.objects td.level-3 {
    padding-left: 83px;
}
.level-2 .arrow {
    margin-right: 8px;
}
.property-dock {
    flex: 1;
}
.property-tools {
    display: flex;
    align-items: center;
    flex: none;
    gap: 9px;
    height: 39px;
    padding: 0 7px 0 4px;
}
.property-tools .filter {
    flex: 1;
    min-width: 0;
    margin-right: -4px;
}
.property-tools svg, .signal-tools svg {
    width: 24px;
    height: 24px;
}
.has-menu {
    position: relative;
}
.has-menu::after {
    content: "";
    position: absolute;
    right: -3px;
    bottom: 1px;
    border: 3px solid transparent;
    border-top-color: #333;
    border-bottom: none;
}
.object-name {
    flex: none;
    height: 19px;
    margin-bottom: 1px;
    padding: 0 2px;
    border: 1px solid #b5b2ae;
    line-height: 17px;
}
.property-view {
    flex: 1;
}
.col-property {
    width: 203px;
}
.properties td {
    height: 19px;
    border-bottom: 1px solid #bfbcb8;
}
.properties td:first-child {
    padding-left: 23px;
}
.properties td + td {
    border-left: 1px solid #bfbcb8;
}
.properties td .arrow {
    margin: 0 9px 0 -19px;
}
.properties td .closed {
    margin: 0 11px 0 -16px;
}
.properties .section {
    background: #9d9b97;
    color: #fff;
}
.properties input {
    display: block;
    appearance: none;
    width: 14px;
    height: 14px;
    border: 1px solid #b5b2ae;
    border-radius: 1px;
    background: #fff;
}
.green-1 {
    background: #dfffdf;
}
.green-2 {
    background: #bfffbf;
}
.cyan-1 {
    background: #e5ffff;
}
.cyan-2 {
    background: #c4ffff;
}
.blue-1 {
    background: #dfe5ff;
}
.blue-2 {
    background: #bfcfff;
}
.signal-tools {
    display: flex;
    align-items: center;
    flex: none;
    gap: 7px;
    height: 38px;
    padding: 0 0 2px 7px;
}
.signal-view {
    height: 99px;
}
.signals td {
    height: 15px;
    line-height: 15px;
}
.sorted {
    position: relative;
}
.sorted::after {
    content: "";
    position: absolute;
    right: 4px;
    top: 7px;
    border: 4px solid transparent;
    border-bottom-color: #333;
    border-top: none;
}
.tabs {
    display: flex;
    align-items: flex-start;
    flex: none;
    margin-top: 1px;
    border-top: 1px solid #b5b2ae;
}
.tabs button {
    height: 22px;
    padding: 0 10px;
    border: 1px solid #b5b2ae;
    border-top: none;
    border-left: none;
    border-radius: 0 0 3px 3px;
    background: #dcd9d5;
}
.tabs .active {
    height: 24px;
    margin-top: -1px;
    border-left: 1px solid #b5b2ae;
    background: #f6f3f0;
}
```
